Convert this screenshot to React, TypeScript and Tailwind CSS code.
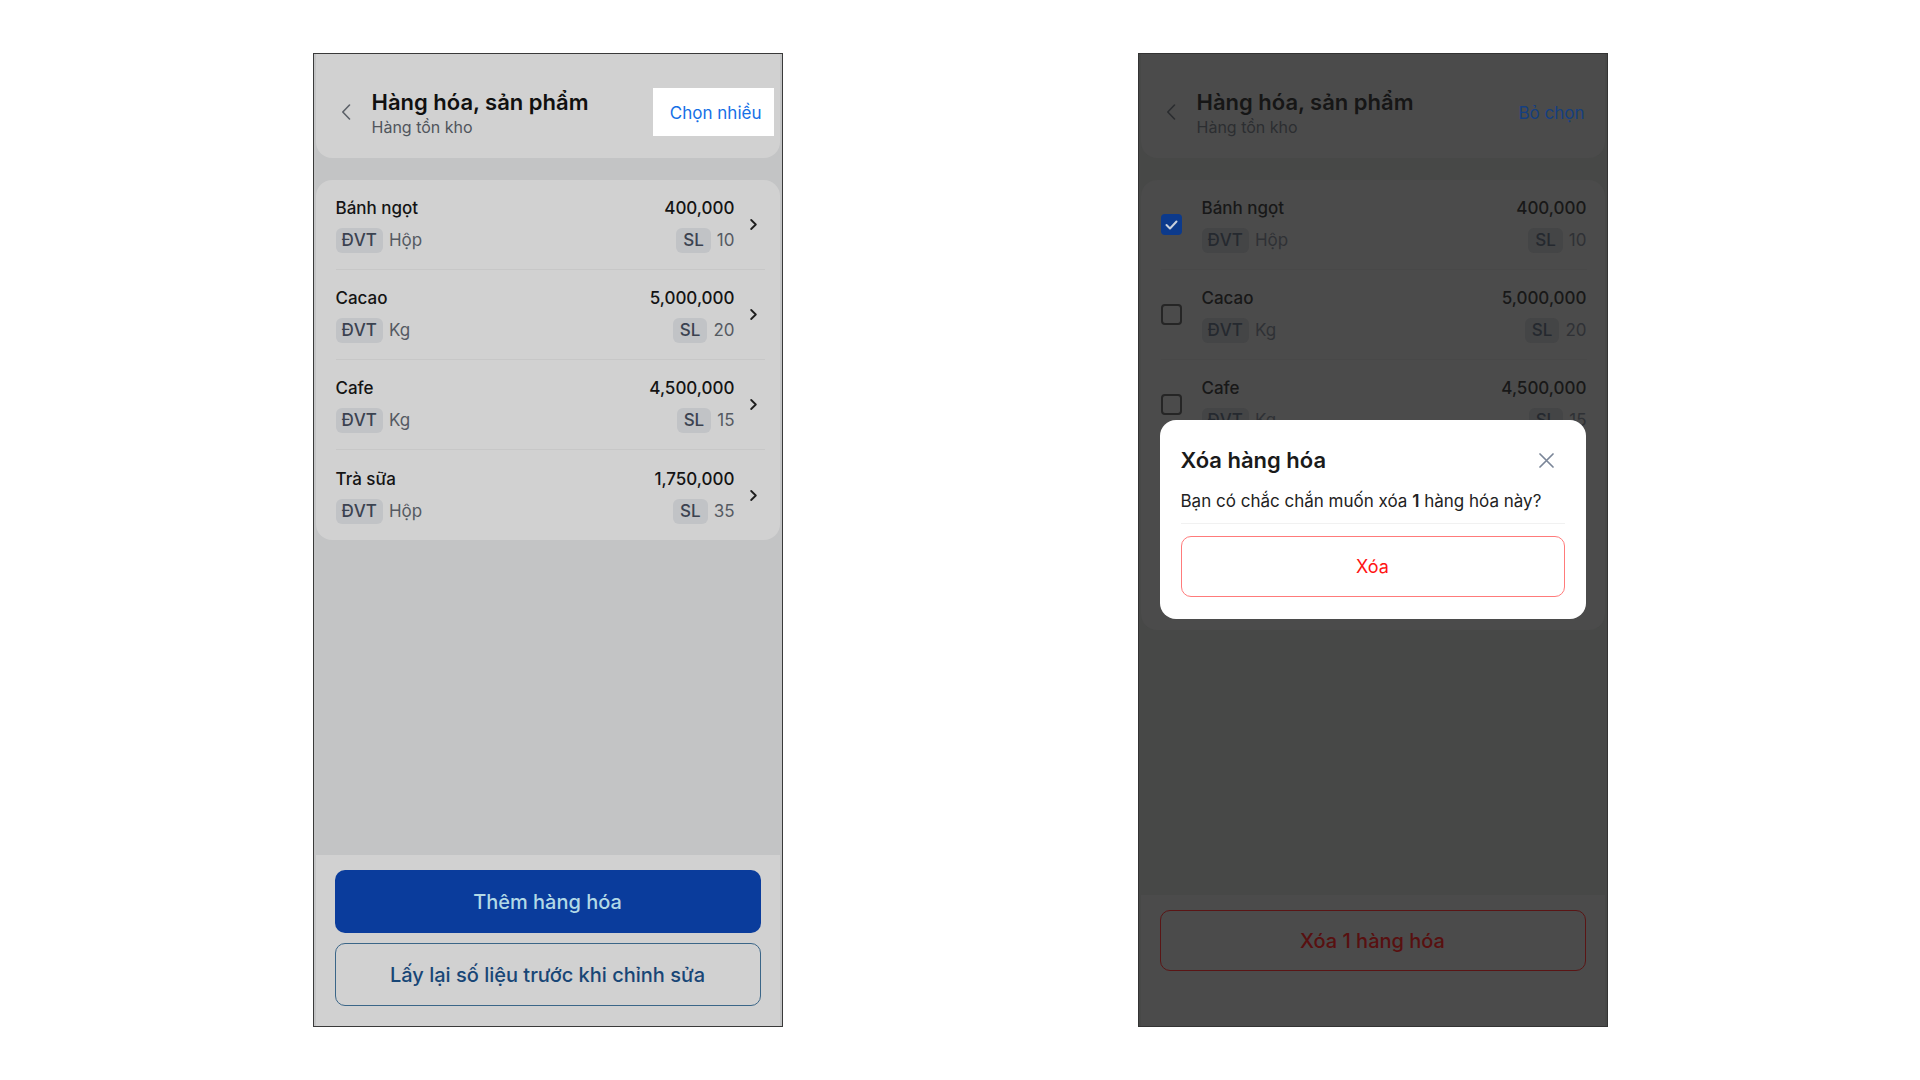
import React from "react";

type Item = {
  name: string;
  price: string;
  unit: string;
  qty: number;
};

type Theme = {
  screen: string;
  card: string;
  title: string;
  sub: string;
  back: string;
  text: string;
  badge: string;
  value: string;
  line: string;
  chevron: string;
};

const items: Item[] = [
  { name: "Bánh ngọt", price: "400,000", unit: "Hộp", qty: 10 },
  { name: "Cacao", price: "5,000,000", unit: "Kg", qty: 20 },
  { name: "Cafe", price: "4,500,000", unit: "Kg", qty: 15 },
  { name: "Trà sữa", price: "1,750,000", unit: "Hộp", qty: 35 },
];

// the second screen has one more row, hidden under the dialog
const moreItems: Item[] = [
  ...items,
  { name: "Bánh quy", price: "2,250,000", unit: "Hộp", qty: 25 },
];

/* ================= THEMES ================= */
const light: Theme = {
  screen: "bg-[#c3c4c5]",
  card: "bg-[#d1d1d1]",
  title: "text-[#101010]",
  sub: "text-[#50555c]",
  back: "text-[#5c6168]",
  text: "text-[#141414]",
  badge: "bg-[#c1c3c6] text-[#3b4250]",
  value: "text-[#555a62]",
  line: "border-[#c7c7c7]",
  chevron: "text-[#1e1e1e]",
};

const dark: Theme = {
  screen: "bg-[#474847]",
  card: "bg-[#4b4b4b]",
  title: "text-[#161616]",
  sub: "text-[#2c2e31]",
  back: "text-[#2b2d30]",
  text: "text-[#181818]",
  badge: "bg-[#444546] text-[#25292f]",
  value: "text-[#2f3135]",
  line: "border-[#484848]",
  chevron: "text-[#181818]",
};

/* ================= ICONS ================= */
function BackIcon({ className }: { className: string }) {
  return (
    <svg width="10" height="16" viewBox="0 0 10 16" fill="none" className={className}>
      <path d="M8.5 1 L1.8 8 L8.5 15" stroke="currentColor" strokeWidth="1.6" strokeLinecap="round" strokeLinejoin="round" />
    </svg>
  );
}

function ChevronIcon({ className }: { className: string }) {
  return (
    <svg width="7" height="11" viewBox="0 0 7 11" fill="none" className={className}>
      <path d="M1.2 1 L5.8 5.5 L1.2 10" stroke="currentColor" strokeWidth="1.8" strokeLinecap="round" strokeLinejoin="round" />
    </svg>
  );
}

function CloseIcon() {
  return (
    <svg width="15" height="15" viewBox="0 0 15 15" fill="none" className="text-[#7b8698]">
      <path d="M1 1 L14 14 M14 1 L1 14" stroke="currentColor" strokeWidth="1.7" strokeLinecap="round" />
    </svg>
  );
}

function Checkbox({ checked }: { checked: boolean }) {
  if (!checked) {
    return <div className="h-[21px] w-[21px] shrink-0 rounded-[4px] border-2 border-[#252525]" />;
  }
  return (
    <div className="flex h-[21px] w-[21px] shrink-0 items-center justify-center rounded-[4px] bg-[#0c3a8c]">
      <svg width="13" height="10" viewBox="0 0 13 10" fill="none">
        <path d="M1.5 5 L5 8.5 L11.5 1.5" stroke="#c9d1dd" strokeWidth="2" strokeLinecap="round" strokeLinejoin="round" />
      </svg>
    </div>
  );
}

/* ================= PARTS ================= */
function Header({ t, action }: { t: Theme; action: React.ReactNode }) {
  return (
    <div className={`mx-[2px] flex h-[104px] items-center rounded-b-[16px] pl-[25px] pr-[6px] pt-[12px] ${t.card}`}>
      <BackIcon className={t.back} />
      <div className="ml-[21px] flex-1">
        <div className={`text-[22px] font-semibold leading-[28px] ${t.title}`}>Hàng hóa, sản phẩm</div>
        <div className={`mt-[1px] text-[16px] leading-[20px] ${t.sub}`}>Hàng tồn kho</div>
      </div>
      {action}
    </div>
  );
}

function Row({ item, t, last, check }: { item: Item; t: Theme; last: boolean; check?: boolean }) {
  const selectable = check !== undefined;
  return (
    <div className={`flex h-[90px] pl-[20px] ${selectable ? "pr-[18px]" : "pr-[15px]"}`}>
      <div className={`flex flex-1 items-center ${last ? "" : `border-b ${t.line}`}`}>
        {selectable && (
          <div className="mr-[20px]">
            <Checkbox checked={!!check} />
          </div>
        )}
        <div className="flex-1">
          <div className={`flex justify-between text-[17px] font-medium leading-[24px] ${t.text}`}>
            <span>{item.name}</span>
            <span>{item.price}</span>
          </div>
          <div className="mt-[8px] flex justify-between text-[17px] leading-[25px]">
            <div className="flex">
              <span className={`rounded-[6px] px-[6px] font-medium ${t.badge}`}>ĐVT</span>
              <span className={`ml-[6px] ${t.value}`}>{item.unit}</span>
            </div>
            <div className="flex">
              <span className={`rounded-[6px] px-[7px] font-medium ${t.badge}`}>SL</span>
              <span className={`ml-[6px] ${t.value}`}>{item.qty}</span>
            </div>
          </div>
        </div>
        {!selectable && (
          <div className="ml-[15px] mr-[8px] flex">
            <ChevronIcon className={t.chevron} />
          </div>
        )}
      </div>
    </div>
  );
}

/* ================= SCREENS ================= */
function ListScreen() {
  const t = light;
  return (
    <div className={`flex h-[974px] w-[470px] flex-col border border-[#3a3a3a] ${t.screen}`}>
      <Header
        t={t}
        action={
          <button className="flex h-[48px] w-[121px] items-center justify-end bg-white pr-[12px] pt-[3px] text-[17px] text-[#1570e6]">
            Chọn nhiều
          </button>
        }
      />

      <div className={`mx-[2px] mt-[22px] rounded-[16px] ${t.card}`}>
        {items.map((it, i) => (
          <Row key={it.name} item={it} t={t} last={i === items.length - 1} />
        ))}
      </div>

      <div className={`mx-[2px] mt-auto flex h-[171px] flex-col gap-[10px] px-[19px] pt-[15px] ${t.card}`}>
        <button className="h-[63px] w-full rounded-[10px] bg-[#0a3c9c] text-[20px] font-medium text-[#b2d9e6]">
          Thêm hàng hóa
        </button>
        <button className="h-[63px] w-full rounded-[10px] border-[1.5px] border-[#3b6688] text-[20px] font-medium text-[#184676]">
          Lấy lại số liệu trước khi chỉnh sửa
        </button>
      </div>
    </div>
  );
}

function DeleteScreen() {
  const t = dark;
  return (
    <div className={`relative flex h-[974px] w-[470px] flex-col border border-[#333333] ${t.screen}`}>
      <Header
        t={t}
        action={
          <button className="flex h-[48px] w-[121px] items-center justify-end pr-[14px] pt-[3px] text-[17px] text-[#153f80]">
            Bỏ chọn
          </button>
        }
      />

      <div className={`mx-[2px] mt-[22px] rounded-[16px] ${t.card}`}>
        {moreItems.map((it, i) => (
          <Row key={it.name} item={it} t={t} last={i === moreItems.length - 1} check={i === 0} />
        ))}
      </div>

      <div className={`mx-[2px] mt-auto h-[131px] px-[19px] pt-[15px] ${t.card}`}>
        <button className="h-[61px] w-full rounded-[10px] border-[1.5px] border-[#5a1515] text-[20px] font-medium text-[#581010]">
          Xóa 1 hàng hóa
        </button>
      </div>

      {/* ===== DIALOG ===== */}
      <div className="absolute left-[21px] right-[21px] top-[366px] rounded-[16px] bg-white px-[21px] pb-[22px] pt-[26px]">
        <div className="flex items-center justify-between">
          <div className="text-[22px] font-semibold leading-[28px] text-[#1a1a1a]">Xóa hàng hóa</div>
          <div className="mr-[11px] flex">
            <CloseIcon />
          </div>
        </div>
        <p className="mt-[15px] text-[17px] leading-[24px] text-[#222222]">
          Bạn có chắc chắn muốn xóa <span className="font-semibold">1</span> hàng hóa này?
        </p>
        <div className="mt-[10px] border-t border-[#f1f1f1]" />
        <button className="mt-[12px] h-[61px] w-full rounded-[10px] border border-[#ff7b7b] text-[18px] text-[#ff1414]">
          Xóa
        </button>
      </div>
    </div>
  );
}

export default function App() {
  return (
    <div className="flex h-screen w-full items-center justify-center gap-[355px] bg-white font-['Inter','Noto_Sans',sans-serif]">
      <ListScreen />
      <DeleteScreen />
    </div>
  );
}
